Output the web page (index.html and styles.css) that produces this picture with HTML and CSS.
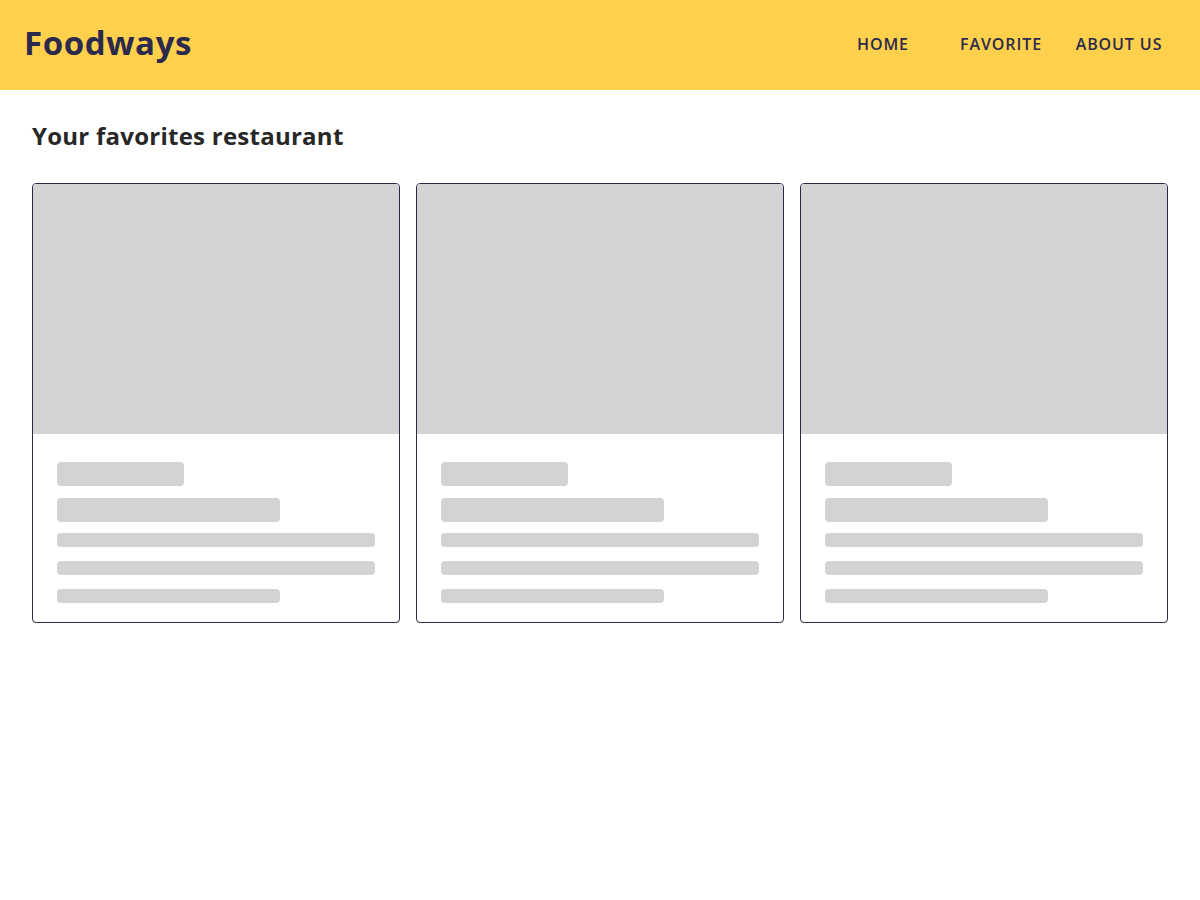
FILE: index.html
```html
<!DOCTYPE html>
<html lang="en">
<head>
    <meta charset="UTF-8">
    <meta name="viewport" content="width=device-width, initial-scale=1.0">
    <title>Foodways</title>
    <link rel="stylesheet" href="styles.css">
</head>
<body>
    <header class="app-bar">
        <h1 class="app-bar__brand">Foodways</h1>
        <nav class="app-bar__nav">
            <a href="#">HOME</a>
            <a href="#">FAVORITE</a>
            <a href="#">ABOUT US</a>
        </nav>
    </header>

    <main class="content">
        <h2 class="content__heading">Your favorites restaurant</h2>

        <div class="restaurants">
            <div class="card">
                <div class="card__image"></div>
                <div class="card__body">
                    <div class="skeleton skeleton--title short"></div>
                    <div class="skeleton skeleton--title"></div>
                    <div class="skeleton skeleton--line full"></div>
                    <div class="skeleton skeleton--line full"></div>
                    <div class="skeleton skeleton--line"></div>
                </div>
            </div>
            <div class="card">
                <div class="card__image"></div>
                <div class="card__body">
                    <div class="skeleton skeleton--title short"></div>
                    <div class="skeleton skeleton--title"></div>
                    <div class="skeleton skeleton--line full"></div>
                    <div class="skeleton skeleton--line full"></div>
                    <div class="skeleton skeleton--line"></div>
                </div>
            </div>
            <div class="card">
                <div class="card__image"></div>
                <div class="card__body">
                    <div class="skeleton skeleton--title short"></div>
                    <div class="skeleton skeleton--title"></div>
                    <div class="skeleton skeleton--line full"></div>
                    <div class="skeleton skeleton--line full"></div>
                    <div class="skeleton skeleton--line"></div>
                </div>
            </div>
        </div>
    </main>
</body>
</html>
```

FILE: styles.css
```css
* {
    box-sizing: border-box;
}
body {
    margin: 0;
    font-family: "Open Sans", "Noto Sans", Arial, sans-serif;
    background-color: #fff;
    color: #272727;
}
.app-bar {
    display: flex;
    align-items: center;
    justify-content: space-between;
    height: 90px;
    padding: 0 22px 0 24px;
    background-color: #ffd04b;
}
.app-bar__brand {
    margin: 0 0 4px;
    font-size: 33px;
    font-weight: 700;
    letter-spacing: 0.6px;
    line-height: 1.2;
    color: #2b2a4c;
}
.app-bar__nav {
    display: grid;
    grid-template-columns: repeat(3, 118px);
    margin-bottom: 2px;
}
.app-bar__nav a {
    text-align: center;
    font-size: 16px;
    font-weight: 600;
    letter-spacing: 0.9px;
    color: #2b2a4c;
    text-decoration: none;
}
.content {
    padding: 29px 32px 32px;
}
.content__heading {
    margin: 0 0 31px;
    font-size: 24px;
    font-weight: 700;
    letter-spacing: 0.25px;
    color: #272727;
}
.restaurants {
    display: grid;
    grid-template-columns: repeat(3, 1fr);
    gap: 16px;
}
.card {
    border: 1px solid #2b2a4c;
    border-radius: 4px;
    overflow: hidden;
}
.card__image {
    height: 250px;
    background-color: #d3d3d3;
}
.card__body {
    padding: 28px 24px 19px;
}
.skeleton {
    background-color: #d3d3d3;
    border-radius: 4px;
    width: 70%;
}
.skeleton--title {
    height: 24px;
    margin-bottom: 12px;
}
.skeleton--title + .skeleton--title {
    margin-bottom: 11px;
}
.skeleton--title.short {
    width: 40%;
}
.skeleton--line {
    height: 14px;
    margin-bottom: 14px;
}
.skeleton--line:last-child {
    margin-bottom: 0;
}
.skeleton--line.full {
    width: 100%;
}
```
